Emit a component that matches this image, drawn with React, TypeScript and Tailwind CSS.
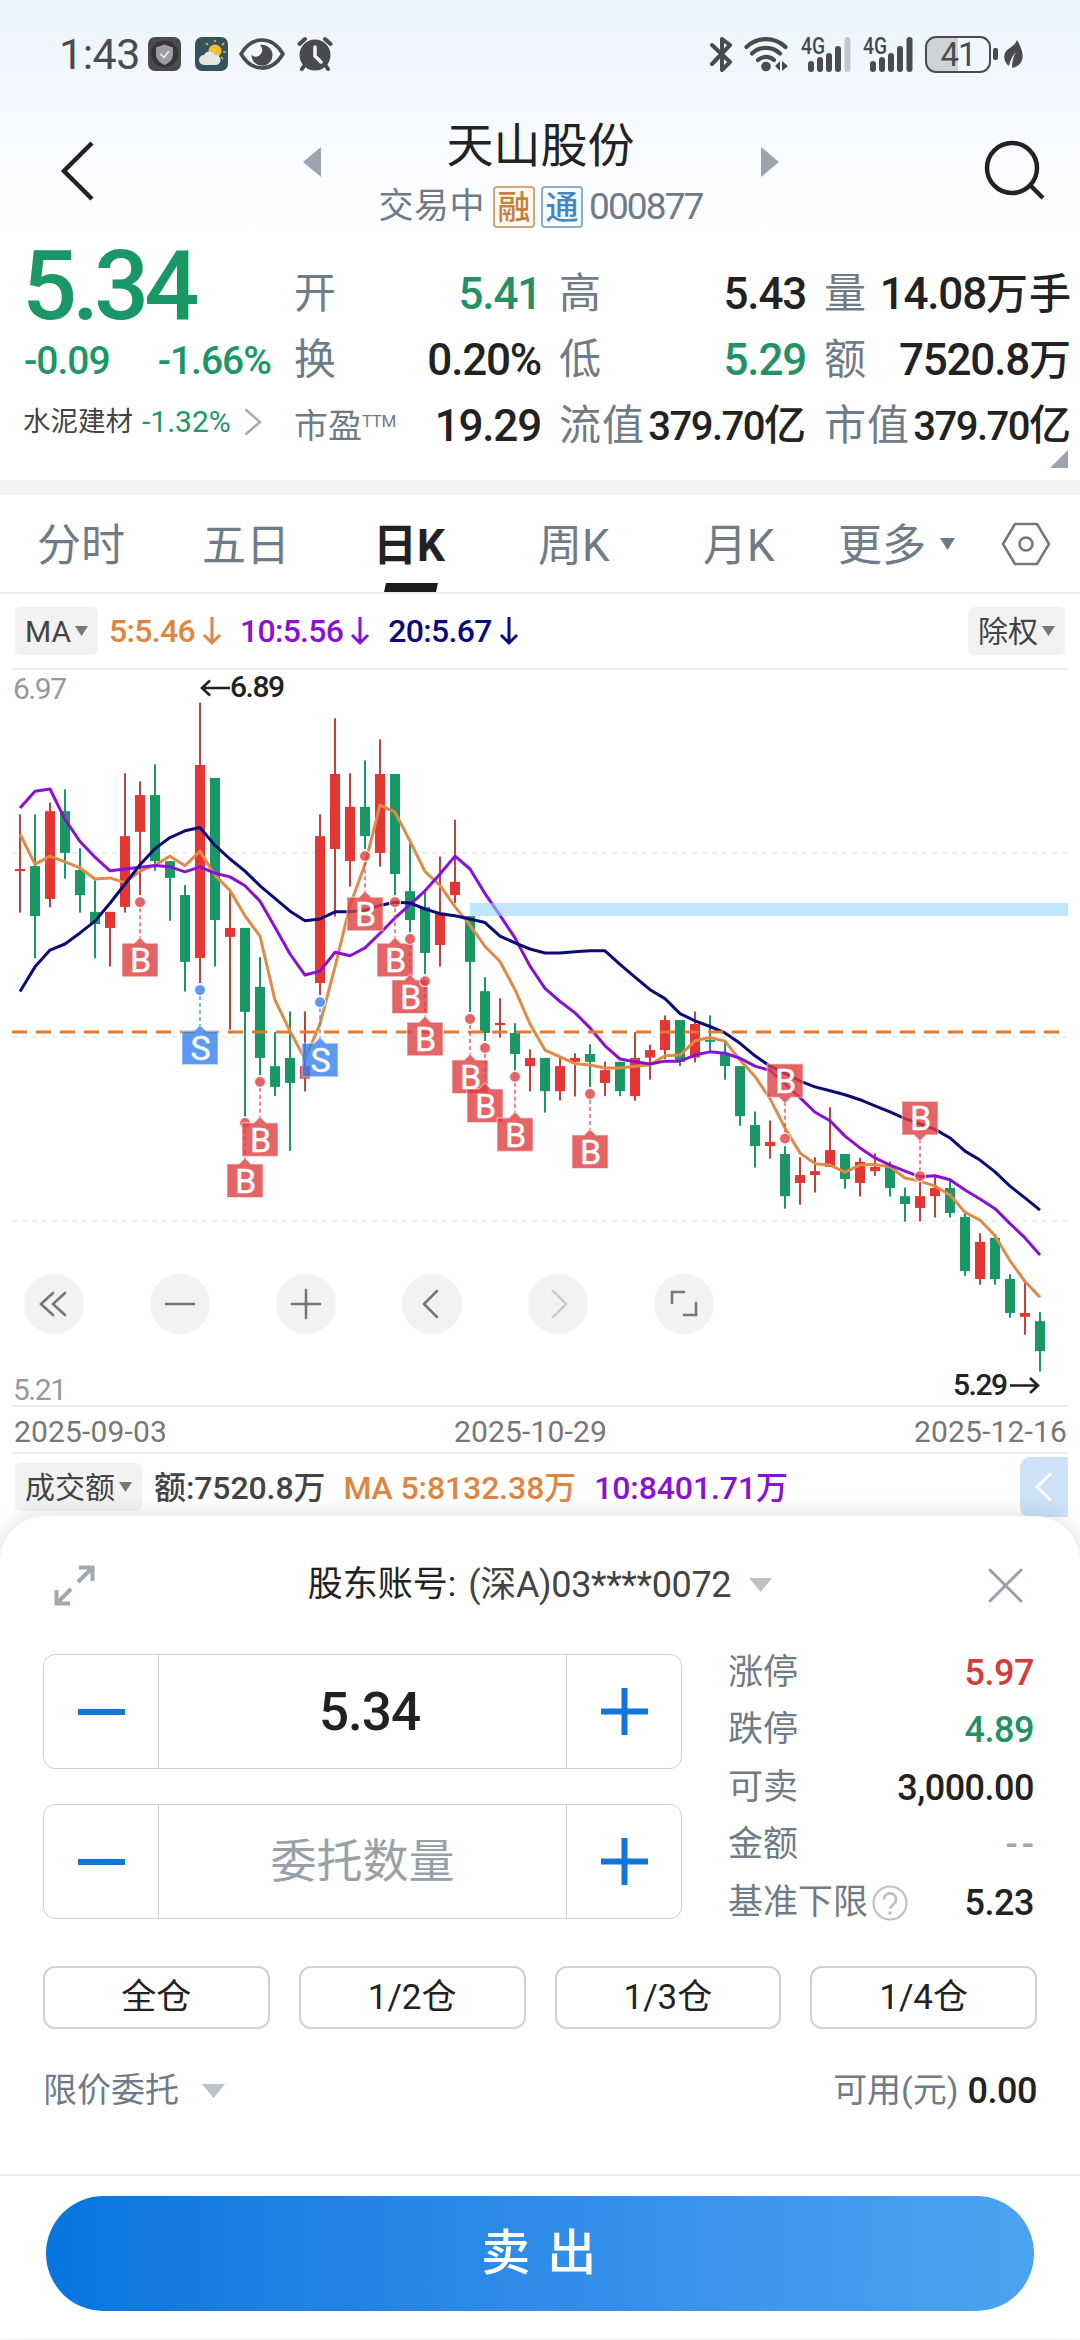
import type { ReactNode } from 'react';
import clsx from 'clsx';

type Candle = [dir: 'r' | 'g', high: number, top: number, bottom: number, low: number];

// plot units, UNIT of them to a pixel
const UNIT = 2.8;
const y = (v: number) => v / UNIT;
const x = (i: number) => 20 + i * 15;

const candles: Candle[] = [
  ['r', 435, 588, 594, 710],
  ['g', 435, 580, 720, 838],
  ['r', 402, 426, 672, 695],
  ['g', 365, 426, 543, 615],
  ['g', 530, 591, 661, 710],
  ['g', 620, 708, 742, 838],
  ['r', 708, 708, 753, 861],
  ['r', 320, 496, 694, 710],
  ['r', 343, 381, 484, 661],
  ['g', 295, 381, 566, 593],
  ['g', 566, 566, 613, 733],
  ['g', 633, 661, 848, 931],
  ['r', 122, 297, 837, 907],
  ['g', 333, 333, 731, 861],
  ['r', 650, 753, 778, 1038],
  ['g', 753, 753, 988, 1281],
  ['g', 835, 918, 1117, 1165],
  ['g', 1045, 1140, 1198, 1224],
  ['g', 987, 1117, 1187, 1377],
  ['r', 987, 1140, 1175, 1211],
  ['r', 435, 496, 907, 941],
  ['r', 166, 322, 532, 721],
  ['r', 320, 414, 566, 637],
  ['g', 284, 414, 496, 532],
  ['r', 225, 322, 543, 581],
  ['g', 322, 322, 602, 661],
  ['g', 515, 650, 731, 765],
  ['g', 650, 695, 823, 882],
  ['r', 553, 710, 801, 861],
  ['r', 450, 624, 661, 683],
  ['g', 720, 720, 848, 988],
  ['g', 891, 930, 1047, 1070],
  ['r', 950, 1019, 1025, 1060],
  ['g', 1020, 1047, 1106, 1152],
  ['r', 1093, 1117, 1140, 1211],
  ['g', 1117, 1117, 1210, 1270],
  ['r', 1117, 1140, 1210, 1236],
  ['r', 1104, 1117, 1128, 1225],
  ['g', 1079, 1106, 1128, 1198],
  ['r', 1127, 1151, 1187, 1224],
  ['g', 1128, 1128, 1210, 1224],
  ['r', 1045, 1117, 1224, 1237],
  ['r', 1080, 1095, 1116, 1178],
  ['r', 998, 1011, 1095, 1120],
  ['g', 1011, 1011, 1128, 1140],
  ['r', 987, 1022, 1116, 1130],
  ['g', 998, 1067, 1072, 1100],
  ['g', 1070, 1105, 1140, 1178],
  ['g', 1140, 1140, 1280, 1307],
  ['g', 1267, 1305, 1364, 1424],
  ['r', 1292, 1352, 1364, 1399],
  ['g', 1364, 1386, 1504, 1539],
  ['r', 1395, 1445, 1467, 1528],
  ['r', 1395, 1434, 1445, 1494],
  ['r', 1255, 1375, 1422, 1422],
  ['g', 1386, 1386, 1456, 1483],
  ['r', 1397, 1408, 1467, 1505],
  ['r', 1384, 1422, 1434, 1447],
  ['g', 1407, 1422, 1481, 1505],
  ['g', 1480, 1504, 1526, 1575],
  ['r', 1465, 1504, 1537, 1575],
  ['r', 1450, 1481, 1504, 1564],
  ['g', 1457, 1481, 1551, 1564],
  ['g', 1550, 1562, 1714, 1727],
  ['r', 1608, 1632, 1736, 1752],
  ['g', 1610, 1621, 1736, 1752],
  ['g', 1723, 1736, 1831, 1844],
  ['r', 1747, 1831, 1842, 1892],
  ['g', 1829, 1854, 1938, 1995],
];

const ma5 = [
  490, 575, 552, 568, 585, 616, 613, 626, 594, 577, 552, 579, 538, 606, 648, 719, 776, 955, 1042, 1120,
  1022, 862, 690, 575, 409, 429, 510, 595, 634, 694, 745, 805, 847, 926, 1022, 1095, 1114, 1133, 1137, 1145,
  1145, 1140, 1136, 1111, 1109, 1069, 1060, 1070, 1123, 1169, 1231, 1313, 1383, 1413, 1417, 1437, 1417, 1415,
  1422, 1453, 1462, 1476, 1501, 1549, 1571, 1615, 1685, 1743, 1787,
];

const ma10 = [
  417, 370, 364, 449, 511, 555, 593, 588, 583, 578, 582, 596, 582, 600, 610, 635, 678, 751, 826, 885,
  874, 821, 831, 809, 768, 725, 688, 649, 602, 552, 588, 657, 718, 781, 860, 922, 959, 991, 1033, 1083,
  1120, 1128, 1134, 1126, 1126, 1109, 1100, 1104, 1118, 1140, 1152, 1190, 1228, 1269, 1293, 1336, 1369, 1397,
  1417, 1434, 1450, 1447, 1458, 1487, 1512, 1539, 1581, 1621, 1669,
];

const ma20 = [
  931, 862, 815, 798, 767, 734, 684, 630, 576, 531, 500, 481, 472, 522, 560, 594, 635, 670, 706, 733,
  728, 708, 708, 703, 690, 681, 683, 700, 713, 719, 728, 738, 776, 795, 812, 823, 823, 820, 817, 817,
  855, 891, 926, 951, 993, 1013, 1029, 1047, 1076, 1111, 1140, 1160, 1182, 1198, 1209, 1220, 1234, 1251,
  1268, 1287, 1302, 1317, 1341, 1378, 1403, 1436, 1476, 1509, 1543,
];

const trades = [
  { side: 'B', at: 8, dot: 681 },
  { side: 'S', at: 12, dot: 927 },
  { side: 'B', at: 15, dot: 1299 },
  { side: 'B', at: 16, dot: 1184 },
  { side: 'S', at: 20, dot: 961 },
  { side: 'B', at: 23, dot: 552 },
  { side: 'B', at: 25, dot: 681 },
  { side: 'B', at: 26, dot: 784 },
  { side: 'B', at: 27, dot: 902 },
  { side: 'B', at: 30, dot: 1008 },
  { side: 'B', at: 31, dot: 1089 },
  { side: 'B', at: 33, dot: 1170 },
  { side: 'B', at: 38, dot: 1218 },
  { side: 'B', at: 51, dot: 1343, above: true },
  { side: 'B', at: 60, dot: 1448, above: true },
];

const tabs = ['分时', '五日', '日K', '周K', '月K'];

const limits = [
  { label: '涨停', value: '5.97', color: 'text-[#d23c3a] tracking-[-0.500px]' },
  { label: '跌停', value: '4.89', color: 'text-[#259066] tracking-[-0.500px]' },
  { label: '可卖', value: '3,000.00', color: 'text-[#222] tracking-[-0.500px]' },
  { label: '金额', value: '--', color: 'text-[#a0a8b0] tracking-[4px] -mr-1' },
  { label: '基准下限', value: '5.23', color: 'text-[#222] tracking-[-0.500px]', help: true },
];

const fractions = ['全仓', '1/2仓', '1/3仓', '1/4仓'];

const linePath = (values: number[]) => values.map((v, i) => `${x(i)},${y(v)}`).join(' ');

function Caret({ className }: { className?: string }) {
  return (
    <svg viewBox="0 0 14 10" preserveAspectRatio="none" className={clsx('shrink-0', className)} fill="currentColor">
      <path d="M0 0h14L7 10z" />
    </svg>
  );
}

function Signal({ weak }: { weak?: boolean }) {
  return (
    <svg width="50" height="36" viewBox="0 0 50 36" fill="#4a4b4d" className="overflow-visible">
      <text x="0" y="18" fontSize="23" fontWeight="500" textLength="24" lengthAdjust="spacingAndGlyphs">4G</text>
      <rect x="7" y="25" width="6" height="11" rx="3" />
      <rect x="16" y="21" width="6" height="15" rx="3" />
      <rect x="25" y="17" width="6" height="19" rx="3" />
      <rect x="34" y="10" width="6" height="26" rx="3" />
      <rect x="43.5" y="1" width="6" height="35" rx="3" fill={weak ? '#c1c5ca' : '#4a4b4d'} />
    </svg>
  );
}

function StatusBar() {
  return (
    <div className="flex h-[108px] items-center pl-[59px] pr-[57px] text-[#4a4b4d]">
      <span className="w-[89px] text-[43px] leading-none tracking-[-0.5px]">1:43</span>
      <svg width="33" height="34" viewBox="0 0 33 34">
        <rect width="33" height="34" rx="7" fill="#4b4b4d" />
        <circle cx="16.5" cy="17" r="13.5" fill="#353537" />
        <path d="M16.5 7.500l8.500 3v7c0 5-4 8.500-8.500 10.500-4.500-2-8.500-5.500-8.500-10.500v-7z" fill="#9b9da1" />
        <path d="M12.500 17l3.500 3.500 5-6.500" stroke="#e9e9ea" strokeWidth="1.800" fill="none" />
      </svg>
      <svg width="33" height="34" viewBox="0 0 33 34" className="ml-[14px]">
        <rect width="33" height="34" rx="7" fill="#37525f" />
        <circle cx="20" cy="14" r="6.500" fill="#f8bd2e" />
        <path d="M20 5v-2M27 8l2-2M28 15h3M13 8l-2-2M26 20l2 2" stroke="#f8bd2e" strokeWidth="1.500" />
        <path d="M9 28a5 5 0 010-10 6 6 0 0111 0 5 5 0 011 10z" fill="#e4e6e8" />
      </svg>
      <svg width="46" height="32" viewBox="0 0 46 32" className="ml-[11px]">
        <path d="M2 16C8 6 15 2 23 2s15 4 21 14c-6 10-13 14-21 14S8 26 2 16z" fill="none" stroke="currentColor" strokeWidth="3.600" strokeLinejoin="round" />
        <path d="M21 7a10.500 10.500 0 11-8.500 10 6 6 0 008.500 0c3-3 3-7 0-10z" fill="currentColor" />
      </svg>
      <svg width="36" height="36" viewBox="0 0 36 36" className="ml-[12px]" fill="none" stroke="currentColor" strokeWidth="4" strokeLinecap="round">
        <circle cx="18" cy="19" r="15.500" fill="currentColor" stroke="none" />
        <path d="M2.500 8L8 3M33.500 8L28 3M7 30l-2 3M29 30l2 3" />
        <path d="M18 11v9l6 6" stroke="#f1f6fd" strokeWidth="3.500" />
      </svg>

      <svg width="23" height="36" viewBox="0 0 23 36" className="ml-auto" fill="none" stroke="currentColor" strokeWidth="4" strokeLinecap="round" strokeLinejoin="round">
        <path d="M2 9l18 17-8 8V3l8 6L2 28" />
      </svg>
      <svg width="45" height="36" viewBox="0 0 45 36" className="ml-[11px]" fill="none" stroke="currentColor" strokeWidth="4.200" strokeLinecap="round">
        <path d="M2.500 11a28 28 0 0139 0M8 17.500a20 20 0 0128 0M14 24a12 12 0 0116 0" />
        <circle cx="22" cy="30.500" r="4.800" fill="currentColor" stroke="none" />
        <path d="M36 25v10l-5-5zM38 25v10l6-5z" fill="currentColor" stroke="none" />
      </svg>
      <div className="ml-3 flex gap-3">
        <Signal weak />
        <Signal />
      </div>
      <div className="ml-3 flex h-[37px] w-[66px] items-center justify-center rounded-[11px] border-[2.500px] border-[#4a4b4d] bg-[linear-gradient(90deg,#cfd3d8_50%,transparent_50%)] text-[33px] leading-none tracking-[-1px]">
        41
      </div>
      <span className="ml-[2px] h-[12px] w-[5px] rounded-[2px] bg-[#4a4b4d]" />
      <svg width="19" height="30" viewBox="0 0 19 30" className="ml-[6px]" fill="currentColor">
        <path d="M13 1c4 7 7 14 5 20-1 4-5 7-10 8 0-6 1-11 4-16-4 4-6 9-7 14-4-3-6-8-4-13C3 9 11 8 13 1z" />
      </svg>
    </div>
  );
}

function StockTag({ children, className }: { children: string; className: string }) {
  return (
    <span className={clsx('flex size-[42px] items-center justify-center rounded-[4px] border-2 text-[33px] leading-none font-medium', className)}>
      {children}
    </span>
  );
}

function Header() {
  return (
    <div className="flex h-[132px] justify-between pl-[60px] pr-[34px]">
      <svg width="34" height="62" viewBox="0 0 34 62" className="mt-[32px]" fill="none" stroke="#222" strokeWidth="4.500">
        <path d="M32 3L4 31l28 28" />
      </svg>
      <div className="ml-[3px] flex flex-col items-center">
        <div className="flex items-center gap-[120px]">
          <Caret className="mt-[40px] h-[18px] w-[30px] rotate-90 text-[#9ca5af]" />
          <h1 className="pt-[9px] text-[47px] leading-[58px] text-[#222]">天山股份</h1>
          <Caret className="mt-[40px] h-[18px] w-[30px] -rotate-90 text-[#9ca5af]" />
        </div>
        <div className="mt-[11px] flex items-center gap-[6px] text-[#6f7b87]">
          <span className="mr-[2px] text-[35px] leading-[42px] tracking-[0.500px]">交易中</span>
          <StockTag className="border-[#d5a577] bg-[#fffaf3] text-[#c87f3a]">融</StockTag>
          <StockTag className="border-[#87afd4] bg-[#f5fbff] text-[#4486c3]">通</StockTag>
          <span className="text-[37px] leading-[42px] tracking-[-1.900px]">000877</span>
        </div>
      </div>
      <svg width="62" height="62" viewBox="0 0 62 62" className="mt-[32px]" fill="none" stroke="#222" strokeWidth="4.500">
        <circle cx="28" cy="28" r="25" />
        <path d="M46 45l13 13" />
      </svg>
    </div>
  );
}

function Stat({ label, children, color = 'text-[#222]', small }: { label: ReactNode; children: ReactNode; color?: string; small?: boolean }) {
  return (
    <div className="flex h-[66px] items-center justify-between whitespace-nowrap">
      <span className="flex text-[42px] leading-none tracking-[1px] text-[#6f7b87]">{label}</span>
      <span className={clsx('leading-none font-medium', color, small ? 'text-[40px] tracking-[-1.500px]' : 'text-[44px] tracking-[-1.200px]')}>
        {children}
      </span>
    </div>
  );
}

function Wan({ children }: { children: string }) {
  return <span className="-mr-[1px] text-[42px] tracking-[1px]">{children}</span>;
}

function Quote() {
  return (
    <div className="relative flex h-[240px] pl-[24px] pr-[9px]">
      <div className="w-[270px] text-[#1a9766]">
        <div className="-ml-[2px] text-[97px] leading-[93px] font-medium tracking-[-5px]">5.34</div>
        <div className="mt-[6px] flex justify-between pr-[23px] text-[39px] leading-[44px] font-medium tracking-[-1px]">
          <span>-0.09</span>
          <span>-1.66%</span>
        </div>
        <div className="mt-[17px] flex items-center text-[30px] leading-[44px]">
          <span className="-ml-[1px] text-[27.500px] text-[#444]">水泥建材</span>
          <span className="ml-[9px]">-1.32%</span>
          <svg width="18" height="28" viewBox="0 0 18 28" className="ml-[13px]" fill="none" stroke="#a3abb4" strokeWidth="2.500">
            <path d="M1.500 1.500L16 14 1.500 26.500" />
          </svg>
        </div>
      </div>
      <div className="grid flex-1 grid-cols-[247px_247px_247px] content-start gap-x-[18px] pt-[21px]">
        <Stat label="开" color="text-[#259066]">5.41</Stat>
        <Stat label="高">5.43</Stat>
        <Stat label="量">14.08<Wan>万手</Wan></Stat>
        <Stat label="换">0.20%</Stat>
        <Stat label="低" color="text-[#259066]">5.29</Stat>
        <Stat label="额">7520.8<Wan>万</Wan></Stat>
        <Stat label={<><span className="text-[34px] tracking-normal">市盈</span><span className="pt-[4px] text-[17px] leading-none tracking-[-0.500px]">TTM</span></>}>19.29</Stat>
        <Stat label="流值" small>379.70<Wan>亿</Wan></Stat>
        <Stat label="市值" small>379.70<Wan>亿</Wan></Stat>
      </div>
      <svg width="18" height="18" viewBox="0 0 18 18" className="absolute right-[12px] bottom-[12px]" fill="#9ca5af">
        <path d="M18 0v18H0z" />
      </svg>
    </div>
  );
}

function ChartTabs() {
  return (
    <div className="flex h-[99px] items-center border-b-2 border-[#ebebeb] pl-[37px] text-[44px] text-[#6f7b87]">
      {tabs.map((tab) => (
        <div
          key={tab}
          className={clsx('relative flex h-full w-[165px] items-center pt-1', tab === '日K' && 'font-bold text-[#222]', tab.endsWith('K') && 'pl-[6px]')}
        >
          {tab}
          {tab === '日K' && <span className="absolute bottom-0 left-[18px] h-[9px] w-[52px] -skew-x-12 bg-[#1c1c1c]" />}
        </div>
      ))}
      <div className="-ml-[24px] flex items-center pt-1">
        更多
        <Caret className="mb-1 ml-[14px] h-[12px] w-[15px]" />
      </div>
      <svg width="50" height="44" viewBox="0 0 50 44" className="ml-[46px]" fill="none" stroke="#777" strokeWidth="2.500" strokeLinejoin="round">
        <path d="M14 2h22l12 20-12 20H14L2 22z" />
        <circle cx="25" cy="22" r="6.500" />
      </svg>
    </div>
  );
}

function Chip({ children }: { children: string }) {
  return (
    <button className="flex h-[48px] items-center gap-[4px] rounded-[6px] bg-[#f2f2f2] px-[10px] text-[30px] whitespace-nowrap text-[#444]">
      {children}
      <Caret className="h-[10px] w-[13px] text-[#777]" />
    </button>
  );
}

function MaValue({ children, className }: { children: string; className: string }) {
  return (
    <span className={clsx('flex items-center gap-[7px] text-[32px] font-medium tracking-[-0.700px]', className)}>
      {children}
      <svg width="20" height="30" viewBox="0 0 20 30" fill="none" stroke="currentColor" strokeWidth="3">
        <path d="M10 1v26M2 19l8 8 8-8" />
      </svg>
    </span>
  );
}

function MaBar() {
  return (
    <div className="flex h-[65px] items-center px-[15px] pt-[9px]">
      <Chip>MA</Chip>
      <div className="ml-[11px] flex gap-[18px]">
        <MaValue className="text-[#e08540]">5:5.46</MaValue>
        <MaValue className="text-[#8a10d8]">10:5.56</MaValue>
        <MaValue className="text-[#0a0a78]">20:5.67</MaValue>
      </div>
      <div className="ml-auto">
        <Chip>除权</Chip>
      </div>
    </div>
  );
}

function TradeMarker({ side, at, dot, above }: { side: string; at: number; dot: number; above?: boolean }) {
  const cx = x(at);
  const cy = y(dot);
  const top = above ? cy - 74.800 : cy + 41;
  const color = side === 'B' ? '#de3e41' : '#3381ee';
  const box = above
    ? `M${cx - 18} ${top}h36v33.600h-12l-6 6-6-6h-12z`
    : `M${cx - 18} ${top}h12l6-6 6 6h12v33.600h-36z`;
  return (
    <g>
      <line x1={cx} x2={cx} y1={above ? top + 38 : cy + 6} y2={above ? cy - 6 : top - 5} stroke={color} strokeOpacity="0.700" strokeWidth="1.800" strokeDasharray="4 3" />
      <circle cx={cx} cy={cy} r="5.500" fill={color} fillOpacity="0.800" stroke="#fff" strokeOpacity="0.800" strokeWidth="1.200" />
      <path d={box} fill={color} fillOpacity="0.800" stroke="#fff" strokeOpacity="0.500" strokeWidth="1.200" strokeLinejoin="round" />
      <text x={cx + 0.5} y={top + 29} textAnchor="middle" fontSize="34" fill="#fff" stroke="#fff" strokeWidth="0.400">{side}</text>
    </g>
  );
}

const tools = [
  { id: 'rewind', d: 'M29 19L17 30l12 11M41 19L29 30l12 11' },
  { id: 'minus', d: 'M16 30h28' },
  { id: 'plus', d: 'M16 30h28M30 16v28' },
  { id: 'prev', d: 'M35 17L22 30l13 13' },
  { id: 'next', d: 'M25 17l13 13-13 13', off: true },
  { id: 'full', d: 'M18 29V18h12M30 41h12V29' },
];

function KLineChart() {
  return (
    <div className="relative h-[750px]">
      <svg width="1080" height="750" viewBox="0 0 1080 750" className="block">
        <path d="M12 10h1056M12 747h1056" stroke="#efefef" strokeWidth="2" />
        <path d="M12 194h1056M12 378h1056M12 562h1056" stroke="#efefef" strokeWidth="2" strokeDasharray="5 5" />
        {candles.map(([dir, high, top, bottom, low], i) => (
          <g key={i} fill={dir === 'r' ? '#e63633' : '#199765'}>
            <rect x={x(i) - 1} y={y(high)} width="2" height={y(low - high)} fill={dir === 'r' ? '#c0413e' : '#199765'} />
            <rect x={x(i) - 5} y={y(top)} width="10" height={y(bottom - top)} />
          </g>
        ))}
        <g fill="none" strokeWidth="3" strokeLinejoin="round">
          <polyline points={linePath(ma5)} stroke="#e08a45" />
          <polyline points={linePath(ma10)} stroke="#8a10d8" />
        </g>
        <rect x="470" y="244" width="598" height="13" fill="#96d3ff" fillOpacity="0.600" />
        <polyline points={linePath(ma20)} fill="none" stroke="#0a0a78" strokeWidth="3" strokeLinejoin="round" />
        <path d="M12 373h1050" stroke="#e27a30" strokeWidth="3.200" strokeDasharray="15 9" />
        {trades.map((trade) => (
          <TradeMarker key={trade.at} {...trade} />
        ))}
        <g fontSize="30" fontWeight="500">
          <text x="13" y="40" fill="#999" fontWeight="400" textLength="54">6.97</text>
          <text x="13" y="741" fill="#999" fontWeight="400" textLength="54">5.21</text>
          <text x="230" y="38" fill="#222" textLength="55">6.89</text>
          <text x="953" y="736" fill="#222" textLength="55">5.29</text>
        </g>
        <path d="M230 29h-28M210 21.500l-8 7.500 8 7.500M1010 726.500h28M1030 719l8 7.500-8 7.500" fill="none" stroke="#222" strokeWidth="2.600" />
      </svg>
      <div className="absolute top-[615px] left-[24px] flex gap-[66px]">
        {tools.map((tool) => (
          <button key={tool.id} className="size-[60px] rounded-full bg-[#f2f2f2]">
            <svg viewBox="0 0 60 60" fill="none" stroke={tool.off ? '#ccc' : '#777'} strokeWidth="2.600" strokeLinecap="round">
              <path d={tool.d} />
            </svg>
          </button>
        ))}
      </div>
    </div>
  );
}

function ChartFooter() {
  return (
    <>
      <div className="mx-[12px] flex h-[45px] items-center justify-between border-b-2 border-[#efefef] pt-[2px] pr-[1px] pl-[2px] text-[30px] tracking-[0.150px] text-[#777]">
        <span>2025-09-03</span>
        <span className="mr-[20px]">2025-10-29</span>
        <span>2025-12-16</span>
      </div>
      <div className="flex h-[62px] items-center pr-[12px] pl-[15px] text-[32px] font-medium tracking-[-0.100px] whitespace-nowrap">
        <div className="pt-[4px] font-normal tracking-normal">
          <Chip>成交额</Chip>
        </div>
        <div className="ml-[12px] flex gap-[18px] pt-[5px]">
          <span className="text-[#444]">额:7520.8万</span>
          <span className="text-[#e08540]">MA 5:8132.38万</span>
          <span className="text-[#8a10d8]">10:8401.71万</span>
        </div>
        <button className="mt-[4px] ml-auto flex h-[60px] w-[48px] items-center justify-center rounded-l-[10px] bg-[#cde2f7]">
          <svg width="18" height="30" viewBox="0 0 18 30" fill="none" stroke="#fff" strokeWidth="3">
            <path d="M16 1.500L2 15l14 13.500" />
          </svg>
        </button>
      </div>
    </>
  );
}

function Stepper({ children }: { children: ReactNode }) {
  return (
    <div className="grid h-[115px] w-[639px] grid-cols-[115px_1fr_115px] items-center rounded-[12px] border border-[#cfcfcf] text-center">
      <button className="flex h-full items-center justify-center border-r border-[#cfcfcf]">
        <span className="h-[6px] w-[47px] bg-[#1276d8]" />
      </button>
      {children}
      <button className="flex h-full items-center justify-center border-l border-[#cfcfcf]">
        <svg width="47" height="47" viewBox="0 0 47 47" stroke="#1276d8" strokeWidth="6">
          <path d="M0 23.500h47M23.500 0v47" />
        </svg>
      </button>
    </div>
  );
}

function OrderSheet() {
  return (
    <div className="relative flex h-[823px] flex-col rounded-t-[45px] bg-white shadow-[0_0_24px_rgba(0,0,0,0.14)]">
      <div className="flex h-[138px] items-center justify-between pr-[57px] pl-[53px]">
        <svg width="43" height="43" viewBox="0 0 43 43" fill="none" stroke="#a0a8b0" strokeWidth="4">
          <path d="M25 18L39 4M26 3.500h13.500V17M18 25L4 39M3.500 26v13.500H17" />
        </svg>
        <div className="-ml-[4px] flex items-center text-[35px] text-[#222]">
          股东账号:
          <span className="ml-[12px] text-[36px] tracking-[-0.350px] text-[#444]">(深A)03****0072</span>
          <Caret className="ml-[18px] h-[14px] w-[23px] text-[#bcc2c8]" />
        </div>
        <svg width="35" height="35" viewBox="0 0 35 35" stroke="#98a1aa" strokeWidth="3" strokeLinecap="round">
          <path d="M2 2l31 31M33 2L2 33" />
        </svg>
      </div>

      <div className="flex pr-[46px] pl-[43px]">
        <div className="flex flex-col gap-[35px]">
          <Stepper>
            <span className="pt-[2px] pl-[14px] text-[53px] font-medium tracking-[-1px] text-[#222]">5.34</span>
          </Stepper>
          <Stepper>
            <span className="text-[46px] text-[#98a1aa]">委托数量</span>
          </Stepper>
        </div>
        <div className="-mt-[10px] ml-[46px] flex-1 text-[35px]">
          {limits.map(({ label, value, color, help }) => (
            <div key={label} className="flex h-[57.500px] items-center justify-between">
              <span className="flex items-center text-[#6f7b87]">
                {label}
                {help && (
                  <svg width="36" height="36" viewBox="0 0 36 36" className="ml-[4px]" fill="none" stroke="#bcc2c8" strokeWidth="2.200">
                    <circle cx="18" cy="18" r="16.500" />
                    <path d="M12 14.500a6 6 0 1110 4.300c-2 1.700-4 2.500-4 5" strokeWidth="2.800" />
                    <path d="M18 26.500v3" strokeWidth="3.200" />
                  </svg>
                )}
              </span>
              <span className={clsx('text-[36px] font-medium', color)}>{value}</span>
            </div>
          ))}
        </div>
      </div>

      <div className="mt-[34px] grid grid-cols-4 gap-[29px] pr-[43px] pl-[43px]">
        {fractions.map((label) => (
          <button key={label} className="h-[63px] rounded-[12px] border-2 border-[#cfd2d5] text-[35px] leading-none text-[#222]">
            {label}
          </button>
        ))}
      </div>

      <div className="mt-[36px] flex h-[52px] items-center pr-[43px] pl-[43px] text-[34px] text-[#6f7b87]">
        限价委托
        <Caret className="ml-[23px] h-[14px] w-[23px] text-[#bcc2c8]" />
        <span className="ml-auto">可用(元)</span>
        <span className="ml-[9px] text-[36px] font-medium tracking-[-0.500px] text-[#222]">0.00</span>
      </div>

      <div className="mt-auto h-[165px] border-t-2 border-[#ebebeb] px-[46px] pt-[20px]">
        <button className="h-[115px] w-full rounded-full bg-linear-to-r from-[#0675df] to-[#4ca3f1] text-[49px] leading-none font-medium tracking-[2.500px] text-white">
          卖 出
        </button>
      </div>
    </div>
  );
}

export default function App() {
  return (
    <div className="h-[2340px] w-[1080px] overflow-hidden bg-white font-['Roboto','Noto_Sans_CJK_SC',sans-serif] font-stretch-90%">
      <div className="h-[240px] bg-linear-to-b from-[#edf4fe] to-white">
        <StatusBar />
        <Header />
      </div>
      <Quote />
      <div className="h-[15px] bg-[#f4f4f4]" />
      <ChartTabs />
      <MaBar />
      <KLineChart />
      <ChartFooter />
      <OrderSheet />
    </div>
  );
}
